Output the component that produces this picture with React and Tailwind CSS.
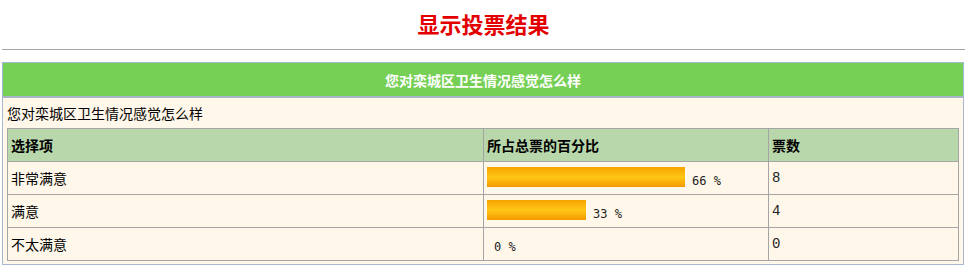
import React from 'react';

const rows = [
    { name: '非常满意', pct: 66, w: 198, votes: 8 },
    { name: '满意', pct: 33, w: 99, votes: 4 },
    { name: '不太满意', pct: 0, w: 0, votes: 0 },
];

const cjk = "font-['Noto_Sans_CJK_SC',sans-serif]";

const App = () => {
    return (
        <div className={`w-[967px] h-[270px] bg-white ${cjk}`}>
            {/* 标题 */}
            <div className="h-[46px] flex items-center justify-center">
                <span className="text-[22px] font-bold text-[#e30000] leading-none">显示投票结果</span>
            </div>
            <div className="mt-[3px] mx-[2px] h-px bg-[#a4a4a4]"></div>

            {/* 投票结果框 */}
            <div className="mt-[12px] ml-[2px] w-[962px] border border-[#a8b8d2] bg-[#fff7e9]">
                <div className="h-[33px] bg-[#76d056] flex items-center justify-center">
                    <span className="text-white font-bold text-[14px] leading-none">您对栾城区卫生情况感觉怎么样</span>
                </div>
                <div className="h-[2px] bg-[#a9b6c8]"></div>
                <div className="px-[4px] pb-[3px]">
                    <div className="h-[30px] flex items-center text-[14px] text-black leading-none">
                        您对栾城区卫生情况感觉怎么样
                    </div>
                    <div className="grid grid-cols-[475px_284px_1fr] gap-px bg-[#a5a5a5] border border-[#a5a5a5] text-[14px] text-black">
                        <div className="h-[32px] bg-[#b8d7aa] flex items-center pl-[3px] font-bold">选择项</div>
                        <div className="h-[32px] bg-[#b8d7aa] flex items-center pl-[3px] font-bold">所占总票的百分比</div>
                        <div className="h-[32px] bg-[#b8d7aa] flex items-center pl-[3px] font-bold">票数</div>
                        {rows.map((r) => (
                            <React.Fragment key={r.name}>
                                <div className="h-[32px] bg-[#fff7e9] flex items-center pl-[3px]">{r.name}</div>
                                <div className="h-[32px] bg-[#fff7e9] flex items-end pl-[3px] pb-[7px]">
                                    {r.w > 0 && (
                                        <div
                                            className="h-[20px] bg-[linear-gradient(to_bottom,#f5a500_0%,#ffc615_50%,#f39a00_100%)]"
                                            style={{ width: r.w }}
                                        ></div>
                                    )}
                                    <span className="ml-[7px] font-['DejaVu_Sans_Mono',monospace] text-[12px] leading-none text-[#222] whitespace-pre">{`${r.pct} %`}</span>
                                </div>
                                <div className="h-[32px] bg-[#fff7e9] flex items-center pl-[3px] font-['Liberation_Mono',monospace] text-[14px] text-[#222]">{r.votes}</div>
                            </React.Fragment>
                        ))}
                    </div>
                </div>
            </div>
        </div>
    );
};

export default App;
